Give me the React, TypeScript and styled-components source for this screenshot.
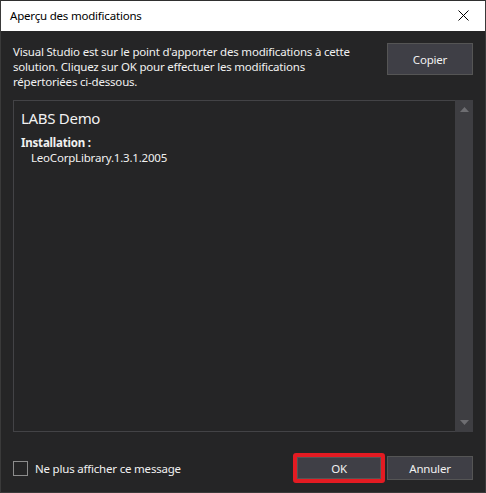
import React from "react";
import styled, { createGlobalStyle } from "styled-components";

const GlobalStyle = createGlobalStyle`
  html, body { margin: 0; padding: 0; background: #252526; }
  * { box-sizing: border-box; }
  body { font-family: "Noto Sans", "Open Sans", "DejaVu Sans", sans-serif; }
`;

const Window = styled.div`
  width: 486px;
  height: 493px;
  border: 1px solid #3a3a3a;
  border-top-color: #2f2f2f;
  display: flex;
  flex-direction: column;
  background: #252526;
  color: #f1f1f1;
  font-size: 11.5px;
  letter-spacing: -0.2px;
`;

const TitleBar = styled.div`
  height: 30px;
  flex: none;
  background: #ffffff;
  display: flex;
  align-items: center;
  justify-content: space-between;
  padding: 0 0 1px 9px;
  color: #000000;
  font-size: 11.5px;
`;

const CloseButton = styled.div`
  width: 46px;
  height: 30px;
  display: flex;
  align-items: center;
  justify-content: center;
  margin-right: -1px;
`;

const Body = styled.div`
  flex: 1;
  display: flex;
  flex-direction: column;
  padding: 12px 12px 9px 12px;
  min-height: 0;
`;

const TopRow = styled.div`
  height: 57px;
  flex: none;
  display: flex;
  justify-content: space-between;
  align-items: flex-start;
`;

const Message = styled.p`
  margin: 1px 0 0 0;
  width: 356px;
  line-height: 15px;
  color: #f1f1f1;
`;

const Button = styled.button<{ $w?: number; $h?: number }>`
  width: ${(p) => p.$w ?? 86}px;
  height: ${(p) => p.$h ?? 24}px;
  background: #3f3f46;
  border: 1px solid #555555;
  color: #f1f1f1;
  font-family: inherit;
  font-size: 11.5px;
  letter-spacing: -0.2px;
  padding: 0;
  display: flex;
  align-items: center;
  justify-content: center;
`;

const Panel = styled.div`
  flex: 1;
  display: flex;
  min-height: 0;
  border: 1px solid #434346;
  border-right: none;
`;

const PanelContent = styled.div`
  flex: 1;
  padding: 7px 7px;
`;

const ProjectName = styled.div`
  font-size: 15px;
  line-height: 20px;
  letter-spacing: -0.3px;
  color: #f1f1f1;
`;

const SectionTitle = styled.div`
  font-weight: bold;
  margin-top: 7px;
  line-height: 15px;
`;

const Item = styled.div`
  padding-left: 10px;
  line-height: 15px;
`;

const ScrollBar = styled.div`
  width: 18px;
  margin: -1px 0;
  background: #3e3e42;
  display: flex;
  flex-direction: column;
  justify-content: space-between;
  align-items: center;
  padding: 7px 0 7px;
`;

const Footer = styled.div`
  flex: none;
  padding-top: 21px;
  display: flex;
  align-items: center;
  justify-content: space-between;
`;

const CheckRow = styled.label`
  display: flex;
  align-items: center;
  gap: 7px;
`;

const CheckBox = styled.span`
  width: 15px;
  height: 15px;
  border: 1px solid #8c8c8c;
  display: inline-block;
`;

const ButtonRow = styled.div`
  display: flex;
  align-items: center;
  gap: 2px;
`;

const Highlight = styled.div`
  border: 4px solid #e41b22;
  border-radius: 3px;
  display: flex;
`;

export default function App() {
  return (
    <>
      <GlobalStyle />
      <Window>
        <TitleBar>
          <span>Aperçu des modifications</span>
          <CloseButton>
            <svg width="11" height="11" viewBox="0 0 11 11">
              <path d="M0.5 0.5 L10.5 10.5 M10.5 0.5 L0.5 10.5" stroke="#000" strokeWidth="1" />
            </svg>
          </CloseButton>
        </TitleBar>
        <Body>
          <TopRow>
            <Message>
              Visual Studio est sur le point d'apporter des modifications à cette solution. Cliquez sur OK
              pour effectuer les modifications répertoriées ci-dessous.
            </Message>
            <Button $w={86} $h={32}>Copier</Button>
          </TopRow>
          <Panel>
            <PanelContent>
              <ProjectName>LABS Demo</ProjectName>
              <SectionTitle>Installation :</SectionTitle>
              <Item>LeoCorpLibrary.1.3.1.2005</Item>
            </PanelContent>
            <ScrollBar>
              <svg width="9" height="5" viewBox="0 0 9 5">
                <path d="M0 5 L4.5 0 L9 5 Z" fill="#6e6e72" />
              </svg>
              <svg width="9" height="5" viewBox="0 0 9 5">
                <path d="M0 0 L4.5 5 L9 0 Z" fill="#6e6e72" />
              </svg>
            </ScrollBar>
          </Panel>
          <Footer>
            <CheckRow>
              <CheckBox />
              <span>Ne plus afficher ce message</span>
            </CheckRow>
            <ButtonRow>
              <Highlight>
                <Button $w={84} $h={22}>OK</Button>
              </Highlight>
              <Button $w={86} $h={24}>Annuler</Button>
            </ButtonRow>
          </Footer>
        </Body>
      </Window>
    </>
  );
}
